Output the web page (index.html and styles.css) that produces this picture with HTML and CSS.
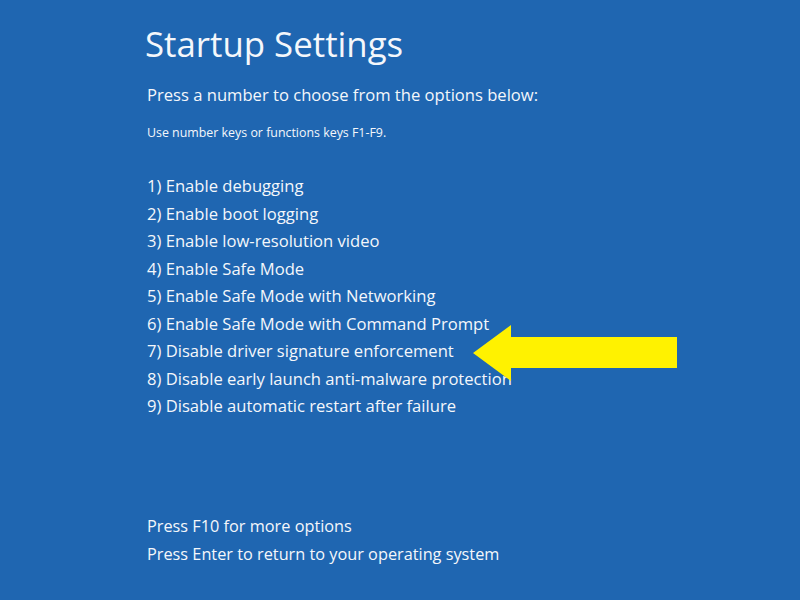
FILE: index.html
```html
<!DOCTYPE html>
<html>
<head>
<meta charset="utf-8">
<link rel="stylesheet" href="styles.css">
</head>
<body>
<main class="screen">
  <h1 class="title">Startup Settings</h1>
  <p class="lead">Press a number to choose from the options below:</p>
  <p class="hint">Use number keys or functions keys F1-F9.</p>
  <ol class="options">
    <li>1) Enable debugging</li>
    <li>2) Enable boot logging</li>
    <li>3) Enable low-resolution video</li>
    <li>4) Enable Safe Mode</li>
    <li>5) Enable Safe Mode with Networking</li>
    <li>6) Enable Safe Mode with Command Prompt</li>
    <li class="marked">7) Disable driver signature enforcement</li>
    <li>8) Disable early launch anti-malware protection</li>
    <li>9) Disable automatic restart after failure</li>
  </ol>
  <div class="footer">
    <p>Press F10 for more options</p>
    <p>Press Enter to return to your operating system</p>
  </div>
  <svg class="arrow" width="206" height="57" viewBox="0 0 206 57">
    <polygon points="0,28 38,0 38,12 204,12 204,43 38,43 38,56" fill="#fff200"/>
  </svg>
</main>
</body>
</html>
```
FILE: styles.css
```css
html, body {
  margin: 0;
  padding: 0;
  background: #1f66b1;
}
.screen {
  position: relative;
  width: 800px;
  height: 600px;
  box-sizing: border-box;
  padding: 20px 0 0 147px;
  font-family: "Open Sans", "Noto Sans", sans-serif;
  color: #f4f7fb;
  display: flex;
  flex-direction: column;
}
.title {
  margin: 0 0 0 -2px;
  font-size: 34.8px;
  font-weight: 400;
  line-height: 48px;
}
.lead {
  margin: 14px 0 0;
  font-size: 16.6px;
  line-height: 26px;
}
.hint {
  margin: 16px 0 0;
  font-size: 12.4px;
  line-height: 18px;
}
.options {
  list-style: none;
  margin: 30px 0 0;
  padding: 0;
  font-size: 16.6px;
  line-height: 27.5px;
}
.footer {
  margin-top: auto;
  margin-bottom: 32px;
  font-size: 16.3px;
  line-height: 27.5px;
}
.footer p {
  margin: 0;
}
.arrow {
  position: absolute;
  left: 473px;
  top: 325px;
}
```
